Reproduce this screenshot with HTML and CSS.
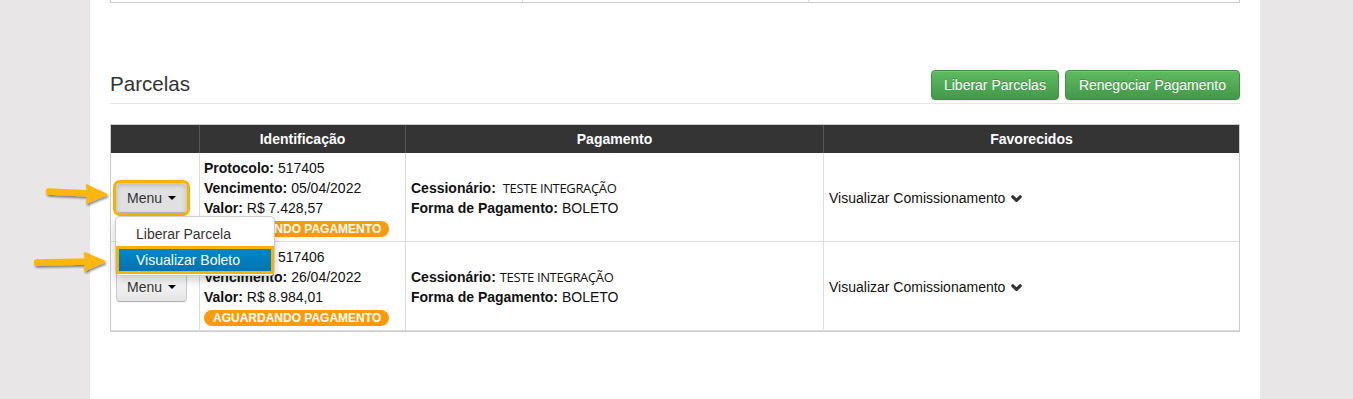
FILE: index.html
```html
<!DOCTYPE html>
<html lang="pt-BR">
<head>
<meta charset="utf-8">
<title>Parcelas</title>
<link rel="stylesheet" href="styles.css">
</head>
<body>
<div class="page">
  <main class="panel">
    <div class="prev-table">
      <div class="prev-cell c1"></div>
      <div class="prev-cell c2"></div>
      <div class="prev-cell c3"></div>
    </div>

    <div class="section-head">
      <h3 class="section-title">Parcelas</h3>
      <div class="actions">
        <button class="btn btn-success">Liberar Parcelas</button>
        <button class="btn btn-success">Renegociar Pagamento</button>
      </div>
    </div>

    <table class="grid">
      <colgroup>
        <col class="col-menu">
        <col class="col-id">
        <col class="col-pay">
        <col class="col-fav">
      </colgroup>
      <thead>
        <tr>
          <th></th>
          <th>Identificação</th>
          <th>Pagamento</th>
          <th>Favorecidos</th>
        </tr>
      </thead>
      <tbody>
        <tr>
          <td class="menu-cell">
            <div class="btn-group">
              <button class="btn btn-default is-active">Menu <span class="caret"></span></button>
              <ul class="dropdown">
                <li class="dd-item">Liberar Parcela</li>
                <li class="dd-item is-hl">Visualizar Boleto</li>
              </ul>
            </div>
          </td>
          <td class="id-cell">
            <div><b>Protocolo:</b> 517405</div>
            <div><b>Vencimento:</b> 05/04/2022</div>
            <div><b>Valor:</b> R$ 7.428,57</div>
            <div><span class="badge">AGUARDANDO PAGAMENTO</span></div>
          </td>
          <td class="pay-cell">
            <div><b>Cessionário:</b> <span class="alt">&nbsp;TESTE INTEGRAÇÃO</span></div>
            <div><b>Forma de Pagamento:</b> BOLETO</div>
          </td>
          <td class="fav-cell">
            Visualizar Comissionamento
            <svg class="chev" width="11" height="8" viewBox="0 0 11 8"><polyline points="1.8,1.8 5.5,5.4 9.2,1.8" fill="none" stroke="#333" stroke-width="3.2" stroke-linecap="round" stroke-linejoin="round"/></svg>
          </td>
        </tr>
        <tr>
          <td class="menu-cell">
            <div class="btn-group">
              <button class="btn btn-default">Menu <span class="caret"></span></button>
            </div>
          </td>
          <td class="id-cell">
            <div><b>Protocolo:</b> 517406</div>
            <div><b>Vencimento:</b> 26/04/2022</div>
            <div><b>Valor:</b> R$ 8.984,01</div>
            <div><span class="badge">AGUARDANDO PAGAMENTO</span></div>
          </td>
          <td class="pay-cell">
            <div><b>Cessionário:</b> <span class="alt">TESTE INTEGRAÇÃO</span></div>
            <div><b>Forma de Pagamento:</b> BOLETO</div>
          </td>
          <td class="fav-cell">
            Visualizar Comissionamento
            <svg class="chev" width="11" height="8" viewBox="0 0 11 8"><polyline points="1.8,1.8 5.5,5.4 9.2,1.8" fill="none" stroke="#333" stroke-width="3.2" stroke-linecap="round" stroke-linejoin="round"/></svg>
          </td>
        </tr>
      </tbody>
    </table>
  </main>

  <svg class="arrow arrow-1" width="70" height="26" viewBox="0 0 70 26">
    <defs>
      <filter id="sh" x="-20%" y="-40%" width="140%" height="180%">
        <feDropShadow dx="1" dy="2" stdDeviation="1.2" flood-color="#000" flood-opacity="0.45"/>
      </filter>
    </defs>
    <g filter="url(#sh)">
      <path d="M5 9.5 L46 11.5" stroke="#fbb710" stroke-width="6.5" stroke-linecap="round" fill="none"/>
      <path d="M43 3.5 Q52 8 62 12.5 Q52 16 43 20.5 Q46 12 43 3.5 Z" fill="#fbb710" stroke="#fbb710" stroke-width="2.5" stroke-linejoin="round"/>
    </g>
  </svg>
  <svg class="arrow arrow-2" width="80" height="26" viewBox="0 0 80 26">
    <g filter="url(#sh)">
      <path d="M4 12.5 L56 11.5" stroke="#fbb710" stroke-width="6.5" stroke-linecap="round" fill="none"/>
      <path d="M52 3.5 Q61 7.5 71 11.5 Q61 15.5 52 20 Q55 11.5 52 3.5 Z" fill="#fbb710" stroke="#fbb710" stroke-width="2.5" stroke-linejoin="round"/>
    </g>
  </svg>
</div>
</body>
</html>
```

FILE: styles.css
```css
* { box-sizing: border-box; }

html, body {
  margin: 0;
  padding: 0;
  height: 100%;
  overflow: hidden;
}

body {
  background: #e8e6e6;
  font-family: "Liberation Sans", Arial, sans-serif;
  font-size: 14px;
  line-height: 20px;
  color: #222;
}

.page {
  position: relative;
  height: 399px;
}

.panel {
  margin-left: 90px;
  width: 1170px;
  height: 399px;
  background: #fff;
  padding: 0 20px;
}

/* fragment of the previous table */
.prev-table {
  display: flex;
  height: 3px;
  border: 1px solid #ccc;
  border-top: 0;
}
.prev-cell { height: 2px; }
.prev-cell.c1 { width: 412px; border-right: 1px solid #ddd; }
.prev-cell.c2 { width: 286px; border-right: 1px solid #ddd; }
.prev-cell.c3 { flex: 1; }

/* heading */
.section-head {
  margin-top: 67px;
  display: flex;
  justify-content: space-between;
  align-items: flex-start;
  padding-bottom: 3px;
  border-bottom: 1px solid #e5e5e5;
}
.section-title {
  margin: 0;
  padding-top: 2px;
  font-size: 20.6px;
  line-height: 23px;
  font-weight: normal;
  color: #333;
}
.actions {
  display: flex;
  gap: 6px;
}

.btn {
  font-family: "Liberation Sans", Arial, sans-serif;
  font-size: 14px;
  line-height: 20px;
  border-radius: 4px;
  cursor: pointer;
}
.btn-success {
  height: 30px;
  padding: 4px 12px;
  color: #fff;
  text-shadow: 0 -1px 0 rgba(0, 0, 0, .2);
  background: linear-gradient(#5fbb5f, #43984a);
  border: 1px solid #3e8f3e;
  box-shadow: inset 0 1px 0 rgba(255, 255, 255, .15), 0 1px 1px rgba(0, 0, 0, .075);
}
.btn-success:last-child { padding: 4px 13px; }

/* table */
.grid {
  margin-top: 20px;
  width: 1130px;
  table-layout: fixed;
  border-collapse: separate;
  border-spacing: 0;
  border: 1px solid #ccc;
}
.col-menu { width: 88px; }
.col-id { width: 206px; }
.col-pay { width: 418px; }
.col-fav { width: auto; }

.grid th {
  background: #343434;
  color: #fff;
  font-weight: bold;
  text-align: center;
  padding: 4px 5px;
  height: 28px;
  border-left: 1px solid #555;
}
.grid th:first-child { border-left: 0; }

.grid td {
  padding: 5px 5px 3px 4px;
  vertical-align: middle;
  border-left: 1px solid #ddd;
  border-bottom: 1px solid #ddd;
  height: 89px;
  color: #111;
}
.grid td:first-child { border-left: 0; }

.menu-cell { padding-left: 5px !important; }
.pay-cell { padding-left: 5px !important; }
.fav-cell { padding-left: 5px !important; }

.alt {
  font-family: "Open Sans", "Noto Sans", sans-serif;
  font-size: 13px;
  letter-spacing: -0.35px;
}

.badge {
  display: inline-block;
  background: #fb9a0c;
  color: #fff;
  font-weight: bold;
  font-size: 12px;
  line-height: 16px;
  padding: 0 8px 0 9px;
  border-radius: 9px;
  vertical-align: middle;
}

.chev {
  vertical-align: 0;
  margin-left: 2px;
}

/* menu button + dropdown */
.btn-group {
  position: relative;
  display: inline-block;
}
.btn-default {
  height: 30px;
  width: 71px;
  padding: 4px 8px;
  color: #333;
  background: linear-gradient(#fff, #e4e4e4);
  border: 1px solid #ccc;
  border-bottom-color: #b3b3b3;
  box-shadow: inset 0 1px 0 rgba(255, 255, 255, .2), 0 1px 1px rgba(0, 0, 0, .05);
  text-align: center;
}
.btn-default.is-active {
  background: #e0e0e0;
  box-shadow: inset 0 2px 4px rgba(0, 0, 0, .15);
  outline: 3px solid #f5b301;
  outline-offset: 0;
}
.caret {
  display: inline-block;
  width: 0;
  height: 0;
  vertical-align: middle;
  margin-left: 2px;
  margin-top: -2px;
  border-top: 4px solid #000;
  border-left: 4px solid transparent;
  border-right: 4px solid transparent;
}

.dropdown {
  position: absolute;
  top: calc(100% + 3px);
  left: -1px;
  z-index: 10;
  width: 160px;
  margin: 0;
  padding: 6px 0 1px;
  list-style: none;
  background: #fff;
  border: 1px solid rgba(0, 0, 0, .2);
  border-radius: 5px;
  box-shadow: 0 4px 10px rgba(0, 0, 0, .2);
}
.dd-item {
  padding: 0 20px;
  height: 23px;
  line-height: 22px;
  color: #333;
  white-space: nowrap;
}
.dd-item.is-hl {
  height: 28px;
  line-height: 22px;
  padding: 0 17px;
  color: #fff;
  background: linear-gradient(#0088cc, #0073b0);
  border: 3px solid #f5b301;
}

/* annotation arrows */
.arrow {
  position: absolute;
  z-index: 20;
  overflow: visible;
}
.arrow-1 { left: 44px; top: 182px; }
.arrow-2 { left: 33px; top: 250px; }
```
